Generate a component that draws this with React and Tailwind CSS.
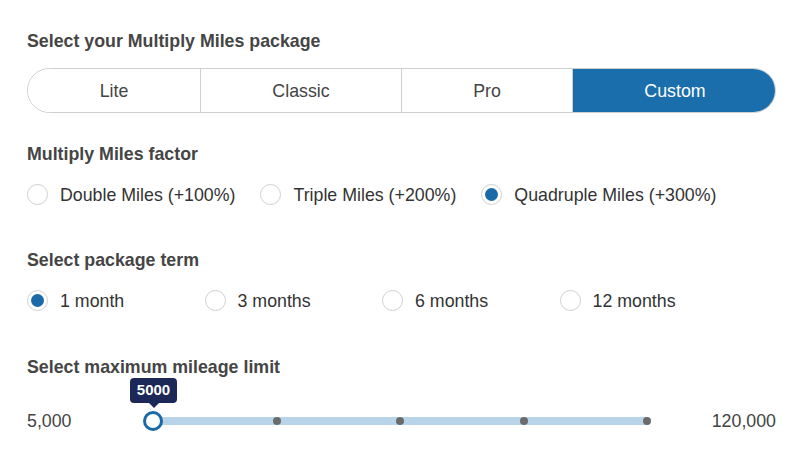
import React, { useState } from "react";

const packages = ["Lite", "Classic", "Pro", "Custom"];
const factors = ["Double Miles (+100%)", "Triple Miles (+200%)", "Quadruple Miles (+300%)"];
const terms = ["1 month", "3 months", "6 months", "12 months"];

function Radio({ checked, label, onClick }) {
    return (
        <button type="button" onClick={onClick} className="h-[21px] flex items-center gap-[12px] text-left">
            <span className="w-[21px] h-[21px] rounded-full border border-[#cfcfcf] bg-white flex items-center justify-center shrink-0">
                {checked && <span className="w-[13px] h-[13px] rounded-full bg-[#1a6aa8]" />}
            </span>
            <span className="text-[17.8px] leading-[20px] text-[#333]">{label}</span>
        </button>
    );
}

function Heading({ children, className = "" }) {
    return <h2 className={`text-[17.8px] font-bold text-[#454545] leading-[20px] ${className}`}>{children}</h2>;
}

export default function App() {
    const [pkg, setPkg] = useState("Custom");
    const [factor, setFactor] = useState(2);
    const [term, setTerm] = useState(0);

    return (
        <div className="w-[800px] h-[459px] bg-white pl-[27px] pt-[31px]" style={{ fontFamily: '"Liberation Sans", Arial, sans-serif' }}>
            <Heading>Select your Multiply Miles package</Heading>

            <div className="mt-[17px] w-[749px] h-[45px] grid grid-cols-[172px_201px_171px_205px] border border-[#cfcfcf] rounded-full overflow-hidden">
                {packages.map((p, i) => (
                    <button
                        key={p}
                        type="button"
                        onClick={() => setPkg(p)}
                        className={`text-[17.8px] leading-[20px] ${i > 0 ? "border-l border-[#cfcfcf]" : ""} ${
                            pkg === p ? "bg-[#1a6eab] text-white" : "bg-white text-[#444]"
                        }`}
                    >
                        {p}
                    </button>
                ))}
            </div>

            <Heading className="mt-[31px]">Multiply Miles factor</Heading>
            <div className="mt-[20px] flex gap-[25px]">
                {factors.map((f, i) => (
                    <Radio key={f} label={f} checked={factor === i} onClick={() => setFactor(i)} />
                ))}
            </div>

            <Heading className="mt-[45px]">Select package term</Heading>
            <div className="mt-[20px] grid grid-cols-[177.5px_177.5px_177.5px_177.5px]">
                {terms.map((t, i) => (
                    <Radio key={t} label={t} checked={term === i} onClick={() => setTerm(i)} />
                ))}
            </div>

            <Heading className="mt-[46px]">Select maximum mileage limit</Heading>
            <div className="mt-[34px] w-[749px] h-[20px] flex items-center">
                <span className="w-[122px] text-[17.8px] leading-[20px] text-[#444]">5,000</span>
                <div className="relative w-[502px] h-[8px] rounded-full bg-[#b8d4e9] flex items-center justify-between">
                    {[0, 1, 2, 3, 4].map((d) => (
                        <span key={d} className="w-[8px] h-[8px] rounded-full bg-[#6b6b6b]" />
                    ))}
                    <span className="absolute left-[-6px] top-[-6px] w-[20px] h-[20px] rounded-full border-[3px] border-[#1a6aa8] bg-white" />
                    <div className="absolute left-[-19px] top-[-39px] flex flex-col items-center">
                        <span className="w-[47px] h-[25px] rounded-[4px] bg-[#1b2858] text-white text-[15px] font-bold flex items-center justify-center">
                            5000
                        </span>
                        <span className="w-0 h-0 border-l-[5px] border-r-[5px] border-t-[5px] border-l-transparent border-r-transparent border-t-[#1b2858]" />
                    </div>
                </div>
                <span className="flex-1 text-right text-[17.8px] leading-[20px] text-[#444]">120,000</span>
            </div>
        </div>
    );
}
